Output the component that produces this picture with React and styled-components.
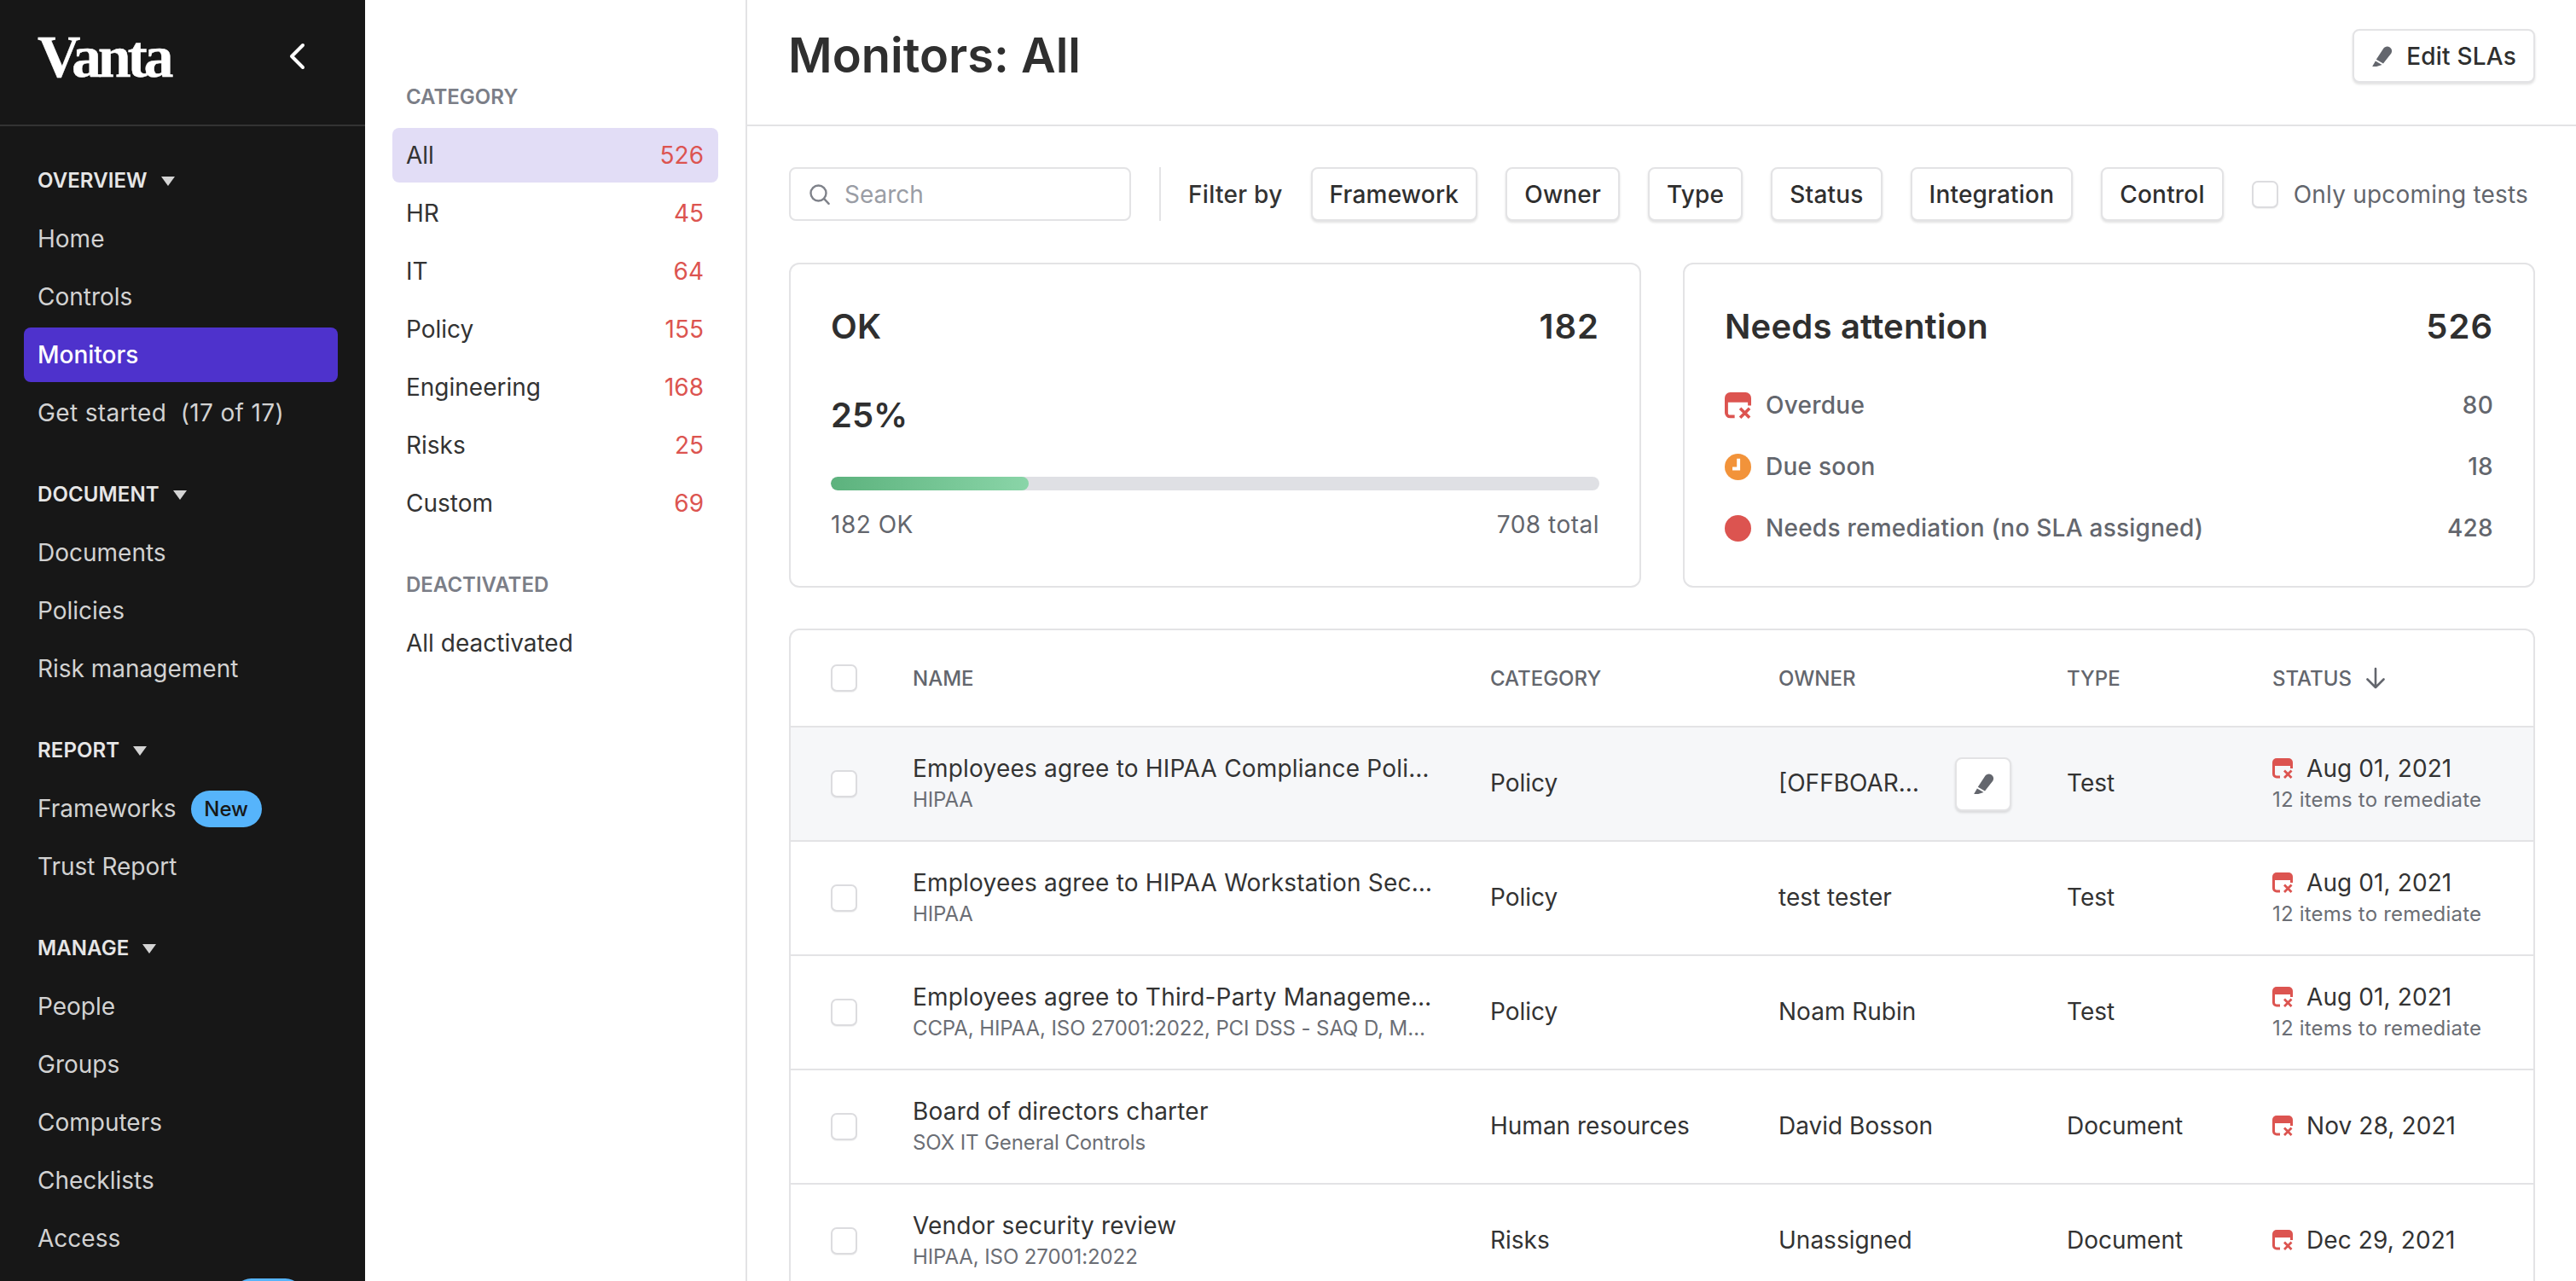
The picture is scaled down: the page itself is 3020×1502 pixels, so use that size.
import React from "react";
import styled, { createGlobalStyle } from "styled-components";

const Global = createGlobalStyle`
  html, body { margin: 0; padding: 0; height: 100%; background: #fff; }
  body { font-family: Inter, "Noto Sans", sans-serif; color: #2f2f2f; }
  * { box-sizing: border-box; }
`;

const Shell = styled.div`display: flex; height: 100vh; overflow: hidden;`;

const Sidebar = styled.aside`
  width: 428px; flex: none; background: #171717; height: 100%; overflow: hidden;
`;
const Brand = styled.div`
  height: 148px; border-bottom: 2px solid #333; display: flex; align-items: center;
  justify-content: space-between; padding: 0 70px 14px 44px;
`;
const Logo = styled.div`
  font-family: "Liberation Serif", serif; font-weight: 700; font-size: 70px; line-height: 1;
  letter-spacing: -4.2px; color: #fff; margin-top: 2px; -webkit-text-stroke: 0.4px #fff;
`;
const SideNav = styled.nav`padding: 47px 32px 0 28px;`;
const NavGroup = styled.div`
  display: flex; flex-direction: column; gap: 4px; & + & { margin-top: 47px; }
`;
const NavHeading = styled.div`
  height: 32px; display: flex; align-items: center; gap: 16px; padding-left: 16px; margin-bottom: 17px;
  font-size: 24px; font-weight: 600; letter-spacing: 0.1px; color: #e6e6e6; text-transform: uppercase;
`;
const Caret = styled.span`
  width: 0; height: 0; border-left: 8px solid transparent; border-right: 8px solid transparent;
  border-top: 11px solid #d4d4d4; margin-top: 2px;
`;
const NavItem = styled.div`
  height: 64px; flex: none; display: flex; align-items: center; padding-left: 16px; border-radius: 8px;
  font-size: 28px; white-space: pre;
  letter-spacing: ${p => (p.$wide ? "0.35px" : "0")};
  font-weight: ${p => (p.$active ? 500 : 400)};
  color: ${p => (p.$active ? "#fff" : "#d2d2d2")};
  background: ${p => (p.$active ? "#4e32cc" : "transparent")};
`;
const NewPill = styled.span`
  width: 83px; height: 43px; border-radius: 22px; background: #56b4fb; color: #171717;
  display: flex; align-items: center; justify-content: center; margin-left: ${p => p.$offset || 17}px;
  font-size: 24px; font-weight: 500;
`;

const Panel = styled.aside`
  width: 448px; flex: none; border-right: 2px solid #e3e3e5; padding: 97px 32px 0;
`;
const PanelGroup = styled.div`
  display: flex; flex-direction: column; gap: 4px; & + & { margin-top: 47px; }
`;
const PanelLabel = styled.div`
  height: 32px; display: flex; align-items: center; padding-left: 16px; margin-bottom: 17px;
  font-size: 24px; font-weight: 600; color: #7b7e87; text-transform: uppercase;
`;
const PanelRow = styled.div`
  height: 64px; display: flex; align-items: center; justify-content: space-between; padding: 0 17px 0 16px;
  border-radius: 8px; font-size: 28px; color: #333;
  background: ${p => (p.$active ? "#e2ddf6" : "transparent")};
`;
const Count = styled.span`color: #dc5450;`;

const Main = styled.main`flex: 1; min-width: 0; height: 100%; overflow: hidden;`;
const PageHeader = styled.header`
  height: 148px; border-bottom: 2px solid #e3e3e5; display: flex; align-items: center;
  justify-content: space-between; padding: 0 48px 14px 48px;
`;
const Title = styled.h1`margin: 0; font-size: 56px; font-weight: 600; color: #2f2f2f; line-height: 1.2;`;
const HeaderAction = styled.div`margin-top: -1px;`;
const Content = styled.div`padding: 48px 48px 0 49px;`;
const Toolbar = styled.div`display: flex; align-items: center; height: 63px;`;
const SearchBox = styled.div`
  width: 401px; height: 63px; border: 2px solid #e3e3e5; border-radius: 8px; display: flex; align-items: center;
  gap: 17px; padding-left: 22px; font-size: 28px; color: #9a9da5;
`;
const Divider = styled.div`width: 2px; height: 63px; background: #e3e3e5; margin: 0 32px 0 33px;`;
const FilterLabel = styled.span`font-size: 28px; font-weight: 500; letter-spacing: 0.3px; color: #333; margin-right: 33px;`;
const Button = styled.button`
  height: 63px; padding: 0 ${p => p.$pad || 20}px; border: 2px solid #e3e3e5; border-radius: 8px; background: #fff;
  font-family: inherit; font-size: 28px; font-weight: 500; letter-spacing: 0.2px; color: #2f2f2f; display: flex; align-items: center;
  gap: 16px; box-shadow: 0 2px 3px rgba(0, 0, 0, 0.12); flex: none;
`;
const Filters = styled.div`display: flex; gap: 33px;`;
const Check = styled.span`
  width: 31px; height: 32px; flex: none; display: block; border: 2px solid #dcdcdf; border-radius: 7px; background: #fff;
  box-shadow: 0 1px 1px rgba(0, 0, 0, 0.06);
`;
const CheckRow = styled.label`
  display: flex; align-items: center; gap: 18px; margin-left: 33px; font-size: 28px; letter-spacing: 0.2px; color: #63666d;
`;

const Cards = styled.div`display: grid; grid-template-columns: 999px 1fr; gap: 49px; margin-top: 49px;`;
const Card = styled.section`
  height: 381px; border: 2px solid #e3e3e5; border-radius: 12px; padding: 52px 47px 0;
`;
const CardHead = styled.div`
  height: 40px; display: flex; align-items: center; justify-content: space-between;
  font-size: 40px; font-weight: 600; letter-spacing: 0.2px; color: #2f2f2f;
`;
const HeadCount = styled.span`letter-spacing: 1px;`;
const Percent = styled.div`
  height: 40px; display: flex; align-items: center; margin-top: 64px; font-size: 40px; font-weight: 600; color: #2f2f2f;
`;
const Track = styled.div`height: 16px; margin-top: 53px; border-radius: 8px; background: #dfe0e4; overflow: hidden;`;
const Fill = styled.div`
  height: 100%; border-radius: 8px; background: linear-gradient(90deg, #5cb27d, #8ad5a8);
`;
const CardFoot = styled.div`
  height: 36px; margin-top: 22px; display: flex; align-items: center; justify-content: space-between;
  font-size: 28px; letter-spacing: 0.5px; color: #63666d;
`;
const AttentionList = styled.div`display: flex; flex-direction: column; gap: 32px; margin-top: 53px;`;
const AttentionRow = styled.div`
  height: 40px; display: flex; align-items: center; font-size: 28px; font-weight: 500; letter-spacing: 0.25px; color: #63666d;
`;
const AttentionLabel = styled.span`flex: 1; margin-left: 17px;`;

const Table = styled.div`margin-top: 48px; border: 2px solid #e3e3e5; border-bottom: 0; border-radius: 12px 12px 0 0;`;
const Grid = styled.div`
  display: grid; grid-template-columns: 143px 677px 338px 338px 241px 1fr; align-items: center;
  border-bottom: 2px solid #e3e3e5;
`;
const HeadRow = styled(Grid)`
  height: 114px; font-size: 24px; font-weight: 500; color: #63666d; text-transform: uppercase;
`;
const BodyRow = styled(Grid)`
  height: 134px; font-size: 28px; color: #333; background: ${p => (p.$hover ? "#f6f7f9" : "#fff")};
`;
const CheckCell = styled.div`padding-left: 47px;`;
const Cell = styled.div`padding-bottom: 2px;`;
const Stack = styled.div`display: flex; flex-direction: column; gap: 3px;`;
const Primary = styled.div`height: 34px; line-height: 34px; letter-spacing: 0.2px; white-space: nowrap;`;
const Secondary = styled.div`height: 34px; line-height: 34px; font-size: 24px; letter-spacing: -0.1px; color: #6b6e75; white-space: nowrap;`;
const Note = styled(Secondary)`letter-spacing: 0.2px;`;
const OwnerCell = styled.div`display: flex; align-items: center; justify-content: space-between; padding-right: 65px;`;
const IconButton = styled.button`
  width: 66px; height: 63px; border: 2px solid #e3e3e5; border-radius: 8px; background: #fff; padding: 0; display: flex;
  align-items: center; justify-content: center; box-shadow: 0 2px 3px rgba(0, 0, 0, 0.12);
`;
const DateLine = styled.div`display: flex; align-items: center; gap: 16px; height: 34px; line-height: 34px; letter-spacing: 0.1px;`;
const SortHead = styled.div`display: flex; align-items: center; gap: 16px;`;

const Pencil = () => (
  <svg width="25" height="24" viewBox="0 0 25 24" fill="#63666d" style={{ flex: "none" }}>
    <path d="M14 3.2C15.6 .7 18.9-.2 21.4 1.2C24 2.7 24.9 6 23.4 8.5L14 20.6L5.8 15.8Z" />
    <path d="M4.9 17.5L12.6 22L6.2 24H1.2Z" />
  </svg>
);
const SearchIcon = () => (
  <svg width="24" height="24" viewBox="0 0 24 24" fill="none" stroke="#7f828a" strokeWidth="2.4" strokeLinecap="round">
    <circle cx="10.5" cy="10.5" r="9" />
    <path d="M17.2 17.2L22.6 22.8" />
  </svg>
);
const CalendarX = ({ size = 24 }) => (
  <svg width={size} height={size} viewBox="0 0 24 24" fill="none" style={{ flex: "none" }}>
    <path d="M5 0H19A5 5 0 0 1 24 5V9H0V5A5 5 0 0 1 5 0Z" fill="#dc5450" />
    <path d="M1.5 8V18.5A3.5 3.5 0 0 0 5 22H9M22.5 8V12" stroke="#dc5450" strokeWidth="3" />
    <path d="M14 14.5L22.5 23M22.5 14.5L14 23" stroke="#dc5450" strokeWidth="2.8" />
  </svg>
);
const ClockDot = ({ size = 31 }) => (
  <svg width={size} height={size} viewBox="0 0 24 24" style={{ flex: "none" }}>
    <circle cx="12" cy="12" r="12" fill="#f2933a" />
    <path d="M12.5 4.5V13.5H7" fill="none" stroke="#fff" strokeWidth="3" />
  </svg>
);
const RedDot = ({ size = 31 }) => (
  <svg width={size} height={size} viewBox="0 0 24 24" style={{ flex: "none" }}>
    <circle cx="12" cy="12" r="12" fill="#dc5450" />
  </svg>
);
const Chevron = () => (
  <svg width="20" height="32" viewBox="0 0 20 32" fill="none" stroke="#fff" strokeWidth="4" strokeLinecap="round" strokeLinejoin="round">
    <path d="M17 3L4 16L17 29" />
  </svg>
);
const ArrowDown = () => (
  <svg width="24" height="26" viewBox="0 0 24 26" fill="none" stroke="#63666d" strokeWidth="2.6" strokeLinecap="round" strokeLinejoin="round">
    <path d="M12 2V24M2.5 14.5L12 24L21.5 14.5" />
  </svg>
);

const navGroups = [
  { title: "Overview", items: [{ label: "Home" }, { label: "Controls" }, { label: "Monitors", active: true }, { label: "Get started  (17 of 17)", wide: true }] },
  { title: "Document", items: [{ label: "Documents" }, { label: "Policies" }, { label: "Risk management" }] },
  { title: "Report", items: [{ label: "Frameworks", badge: true }, { label: "Trust Report" }] },
  { title: "Manage", items: [{ label: "People" }, { label: "Groups" }, { label: "Computers" }, { label: "Checklists" }, { label: "Access" }] },
];
const categories = [["All", 526], ["HR", 45], ["IT", 64], ["Policy", 155], ["Engineering", 168], ["Risks", 25], ["Custom", 69]];
const filters = ["Framework", "Owner", "Type", "Status", "Integration", "Control"];
const rows = [
  { name: "Employees agree to HIPAA Compliance Poli…", tags: "HIPAA", cat: "Policy", owner: "[OFFBOAR…", type: "Test", date: "Aug 01, 2021", note: "12 items to remediate", hover: true },
  { name: "Employees agree to HIPAA Workstation Sec…", tags: "HIPAA", cat: "Policy", owner: "test tester", type: "Test", date: "Aug 01, 2021", note: "12 items to remediate" },
  { name: "Employees agree to Third-Party Manageme…", tags: "CCPA, HIPAA, ISO 27001:2022, PCI DSS - SAQ D, M…", cat: "Policy", owner: "Noam Rubin", type: "Test", date: "Aug 01, 2021", note: "12 items to remediate" },
  { name: "Board of directors charter", tags: "SOX IT General Controls", cat: "Human resources", owner: "David Bosson", type: "Document", date: "Nov 28, 2021" },
  { name: "Vendor security review", tags: "HIPAA, ISO 27001:2022", cat: "Risks", owner: "Unassigned", type: "Document", date: "Dec 29, 2021" },
];

export default function App() {
  return (
    <Shell>
      <Global />
      <Sidebar>
        <Brand>
          <Logo>Vanta</Logo>
          <Chevron />
        </Brand>
        <SideNav>
          {navGroups.map(g => (
            <NavGroup key={g.title}>
              <NavHeading>{g.title}<Caret /></NavHeading>
              {g.items.map(i => (
                <NavItem key={i.label} $active={i.active} $wide={i.wide}>
                  {i.label}
                  {i.badge && <NewPill>New</NewPill>}
                </NavItem>
              ))}
              {g.title === "Manage" && <NavItem><NewPill $offset={229} /></NavItem>}
            </NavGroup>
          ))}
        </SideNav>
      </Sidebar>
      <Panel>
        <PanelGroup>
          <PanelLabel>Category</PanelLabel>
          {categories.map(([label, n]) => (
            <PanelRow key={label} $active={label === "All"}>
              <span>{label}</span>
              <Count>{n}</Count>
            </PanelRow>
          ))}
        </PanelGroup>
        <PanelGroup>
          <PanelLabel>Deactivated</PanelLabel>
          <PanelRow>All deactivated</PanelRow>
        </PanelGroup>
      </Panel>
      <Main>
        <PageHeader>
          <Title>Monitors: All</Title>
          <HeaderAction><Button $pad={20}><Pencil />Edit SLAs</Button></HeaderAction>
        </PageHeader>
        <Content>
          <Toolbar>
            <SearchBox><SearchIcon />Search</SearchBox>
            <Divider />
            <FilterLabel>Filter by</FilterLabel>
            <Filters>
              {filters.map(f => <Button key={f}>{f}</Button>)}
            </Filters>
            <CheckRow><Check />Only upcoming tests</CheckRow>
          </Toolbar>
          <Cards>
            <Card>
              <CardHead><span>OK</span><HeadCount>182</HeadCount></CardHead>
              <Percent>25%</Percent>
              <Track><Fill style={{ width: `${(182 / 708) * 100}%` }} /></Track>
              <CardFoot><span>182 OK</span><span>708 total</span></CardFoot>
            </Card>
            <Card>
              <CardHead><span>Needs attention</span><HeadCount>526</HeadCount></CardHead>
              <AttentionList>
                <AttentionRow><CalendarX size={31} /><AttentionLabel>Overdue</AttentionLabel>80</AttentionRow>
                <AttentionRow><ClockDot /><AttentionLabel>Due soon</AttentionLabel>18</AttentionRow>
                <AttentionRow><RedDot /><AttentionLabel>Needs remediation (no SLA assigned)</AttentionLabel>428</AttentionRow>
              </AttentionList>
            </Card>
          </Cards>
          <Table>
            <HeadRow>
              <CheckCell><Check /></CheckCell>
              <div>Name</div>
              <div>Category</div>
              <div>Owner</div>
              <div>Type</div>
              <SortHead>Status<ArrowDown /></SortHead>
            </HeadRow>
            {rows.map(r => (
              <BodyRow key={r.name} $hover={r.hover}>
                <CheckCell><Check /></CheckCell>
                <Stack>
                  <Primary>{r.name}</Primary>
                  <Secondary>{r.tags}</Secondary>
                </Stack>
                <Cell>{r.cat}</Cell>
                <OwnerCell>
                  <Cell>{r.owner}</Cell>
                  {r.hover && <IconButton><Pencil /></IconButton>}
                </OwnerCell>
                <Cell>{r.type}</Cell>
                {r.note ? (
                  <Stack>
                    <DateLine><CalendarX />{r.date}</DateLine>
                    <Note>{r.note}</Note>
                  </Stack>
                ) : (
                  <Cell><DateLine><CalendarX />{r.date}</DateLine></Cell>
                )}
              </BodyRow>
            ))}
          </Table>
        </Content>
      </Main>
    </Shell>
  );
}
